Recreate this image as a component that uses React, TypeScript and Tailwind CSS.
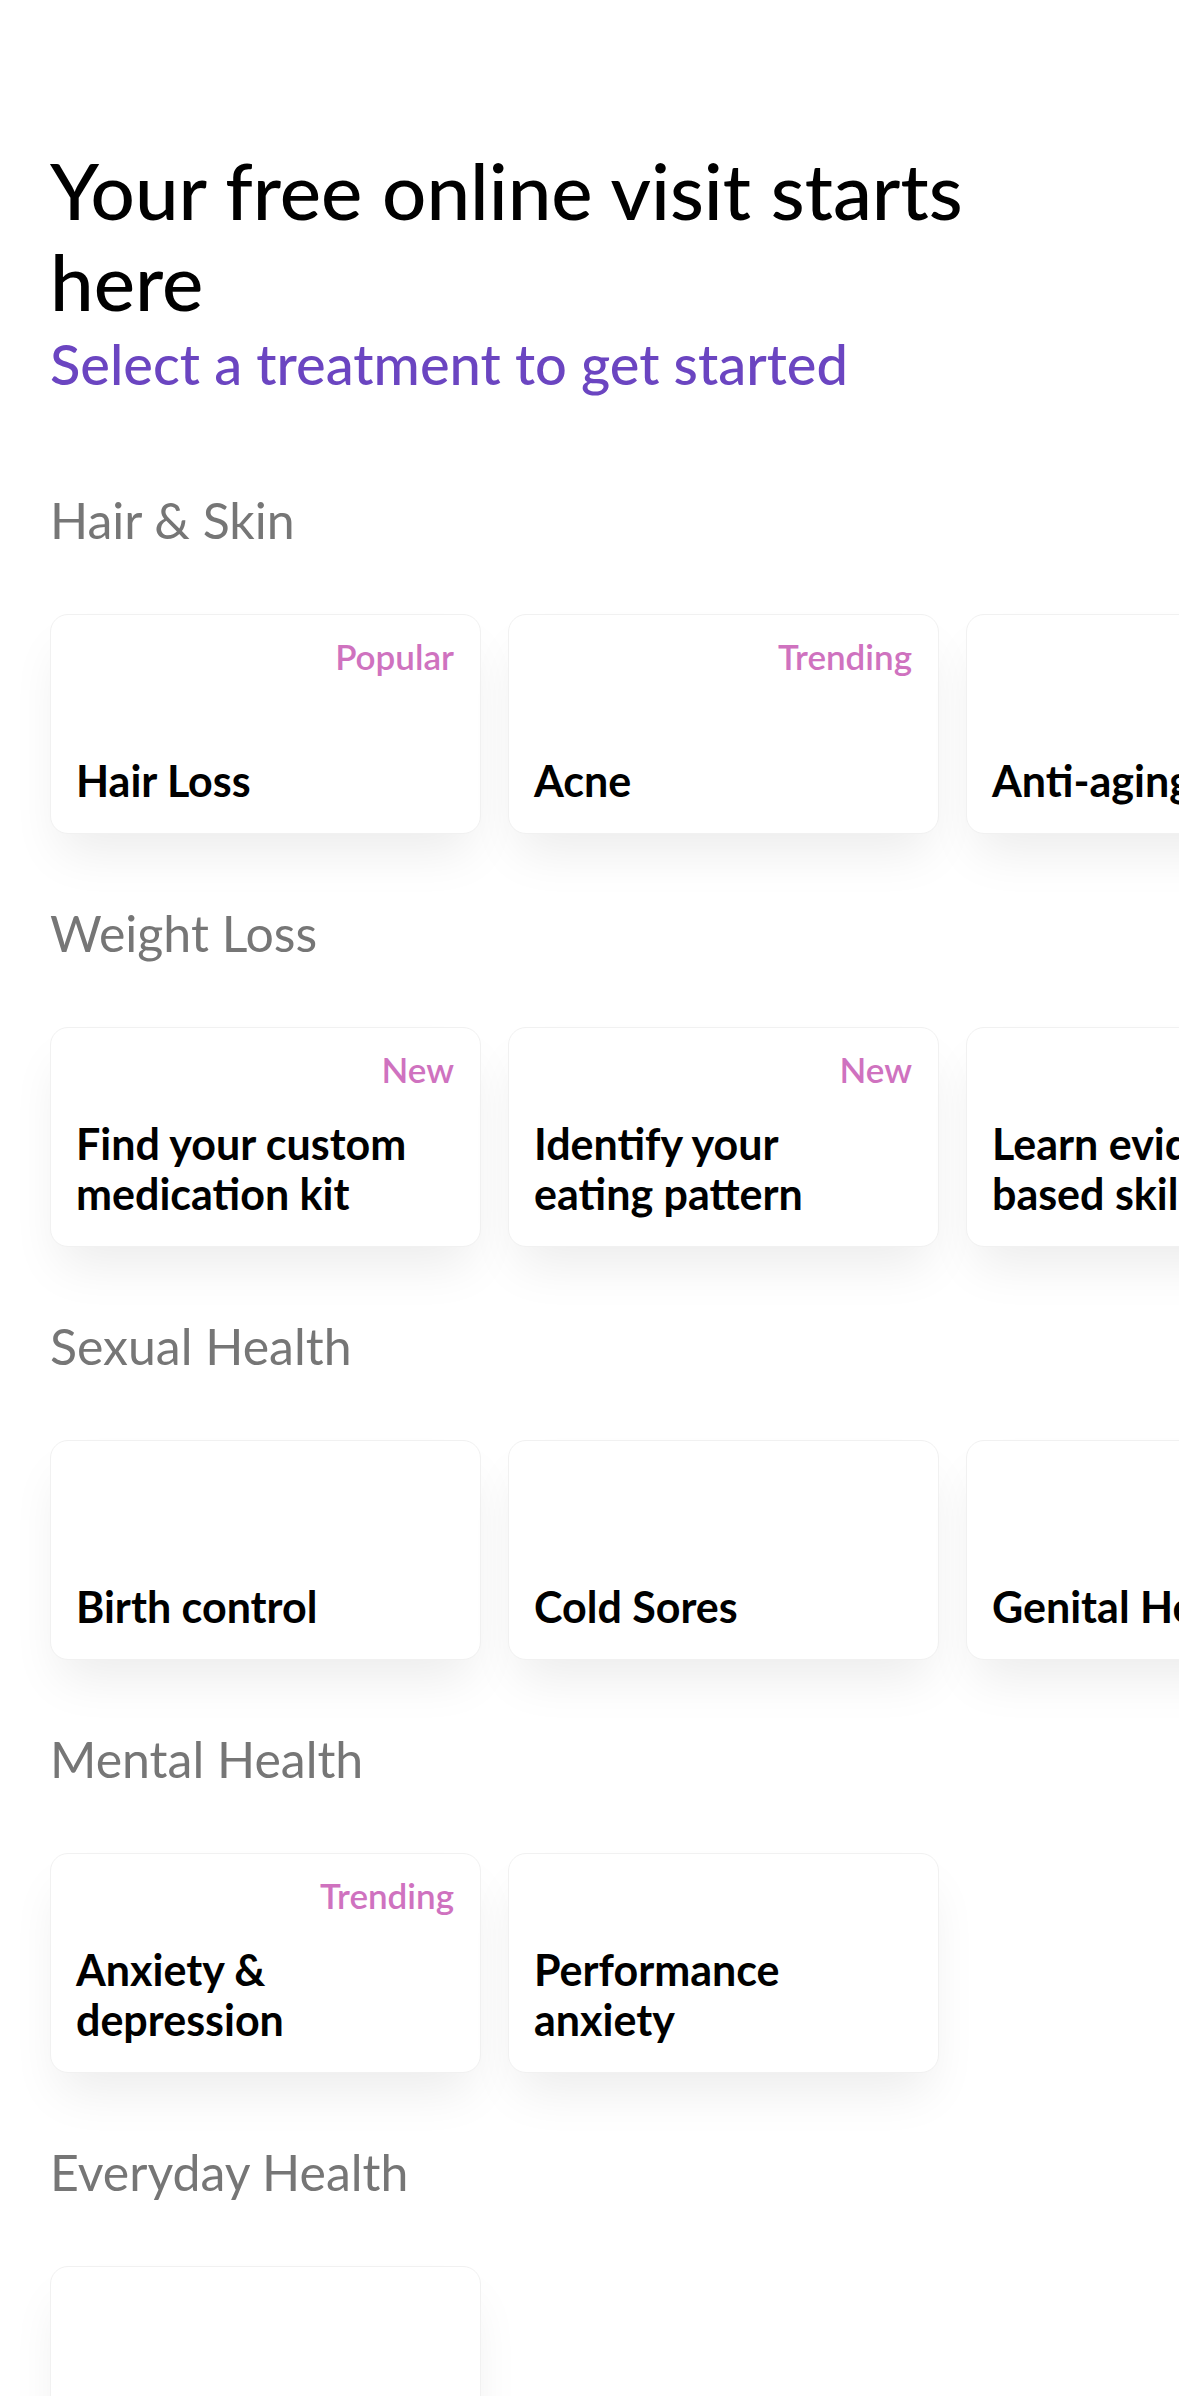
type Treatment = {
    title: string;
    badge?: string;
};

type Category = {
    name: string;
    items: Treatment[];
};

const categories: Category[] = [
    {
        name: "Hair & Skin",
        items: [
            { title: "Hair Loss", badge: "Popular" },
            { title: "Acne", badge: "Trending" },
            { title: "Anti-aging" },
        ],
    },
    {
        name: "Weight Loss",
        items: [
            { title: "Find your custom medication kit", badge: "New" },
            { title: "Identify your eating pattern", badge: "New" },
            { title: "Learn evidence-based skills" },
        ],
    },
    {
        name: "Sexual Health",
        items: [
            { title: "Birth control" },
            { title: "Cold Sores" },
            { title: "Genital Herpes" },
        ],
    },
    {
        name: "Mental Health",
        items: [
            { title: "Anxiety & depression", badge: "Trending" },
            { title: "Performance anxiety" },
        ],
    },
    {
        name: "Everyday Health",
        items: [{ title: "Allergies" }],
    },
];

function TreatmentCard({ title, badge }: Treatment) {
    return (
        <div className="w-[431px] h-[220px] shrink-0 flex flex-col rounded-[18px] bg-white border border-[#f1f1f1] shadow-[0_28px_50px_-10px_rgba(0,0,0,0.08)] pt-[24px] pr-[26px] pb-[27px] pl-[25px]">
            {badge && (
                <span className="self-end text-[35px] leading-[35px] font-semibold text-[#cf72bf]">
                    {badge}
                </span>
            )}
            <span className="mt-auto max-w-[355px] text-[43px] leading-[50px] font-bold text-black">
                {title}
            </span>
        </div>
    );
}

export default function App() {
    return (
        <div className="min-h-screen bg-white overflow-x-clip font-[Lato,sans-serif] pl-[50px] pt-[145px] pb-[80px]">
            <h1 className="max-w-[1000px] text-[78px] leading-[91px] font-medium text-black">
                Your free online visit starts here
            </h1>
            <p className="mt-[6px] text-[56px] leading-[61px] font-medium text-[#6b45c1]">
                Select a treatment to get started
            </p>

            <div className="mt-[96px] flex flex-col gap-[69px]">
                {categories.map((cat) => (
                    <section key={cat.name} className="flex flex-col gap-[64px]">
                        <h2 className="text-[50px] leading-[60px] font-normal text-[#767676]">
                            {cat.name}
                        </h2>
                        <div className="flex gap-[27px]">
                            {cat.items.map((item) => (
                                <TreatmentCard key={item.title} {...item} />
                            ))}
                        </div>
                    </section>
                ))}
            </div>
        </div>
    );
}
